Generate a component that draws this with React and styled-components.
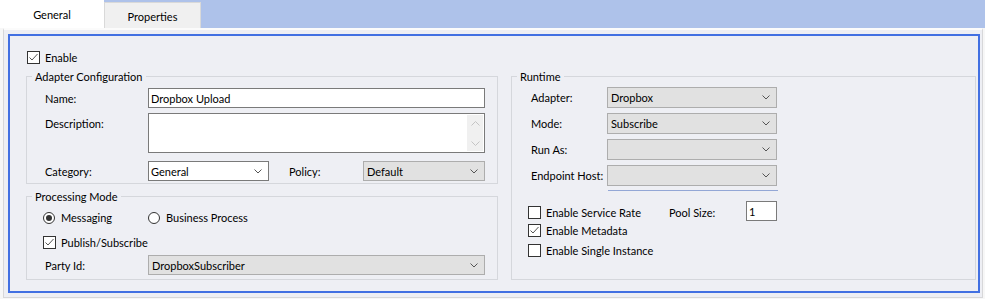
import React from 'react';
import styled, { createGlobalStyle } from 'styled-components';

const GlobalStyle = createGlobalStyle`
  html, body {
    margin: 0;
    padding: 0;
    background: #f7f7f7;
  }
  body {
    font-family: Lato, "Open Sans", sans-serif;
    font-size: 11px;
    color: #000;
  }
  * {
    box-sizing: border-box;
  }
`;

const Window = styled.div`
  width: 985px;
  height: 299px;
  display: flex;
  flex-direction: column;
  background: #f7f7f7;
  overflow: hidden;
`;

const TabStrip = styled.div`
  height: 28px;
  flex-shrink: 0;
  display: flex;
  align-items: flex-end;
  background: #aec2ea;
`;

const Tab = styled.div`
  width: ${p => (p.$active ? 104 : 97)}px;
  height: ${p => (p.$active ? 28 : 26)}px;
  display: flex;
  align-items: center;
  justify-content: center;
  background: ${p => (p.$active ? '#ffffff' : '#f0f0f0')};
  border: ${p => (p.$active ? 'none' : '1px solid #d9d9d9')};
  border-bottom: none;
  padding-top: ${p => (p.$active ? 0 : 1)}px;
`;

const Body = styled.div`
  flex: 1;
  display: flex;
  padding: 0 2px 1px 3px;
`;

const Panel = styled.div`
  flex: 1;
  display: flex;
  background: #eeeff4;
  border: 1px solid #d7d7d9;
  border-top: 2px solid #fbfbfb;
  padding: 4px 2px 4px 4px;
`;

const Frame = styled.div`
  flex: 1;
  border: 2px solid #4270e2;
  padding: 15px 2px 0 16px;
  display: flex;
  flex-direction: column;
`;

const CheckRow = styled.label`
  display: flex;
  align-items: center;
  gap: 5px;
  height: 13px;
  padding-left: ${p => p.$indent || 0}px;
`;

const Columns = styled.div`
  display: grid;
  grid-template-columns: 472px 465px;
  column-gap: 13px;
  margin-top: 6px;
`;

const LeftColumn = styled.div`
  display: flex;
  flex-direction: column;
  gap: 6px;
`;

const Group = styled.fieldset`
  margin: 0;
  padding: 0;
  min-width: 0;
  border: 1px solid #d5d7dc;
  height: ${p => p.$height}px;
`;

const Legend = styled.legend`
  margin-left: 5px;
  padding: 0 3px;
  line-height: 13px;
  font-size: 11px;
`;

const FormGrid = styled.div`
  display: grid;
  grid-template-columns: ${p => p.$cols};
  row-gap: ${p => p.$gap}px;
  padding: ${p => p.$pad};
  align-items: center;
`;

const Label = styled.span`
  align-self: ${p => (p.$top ? 'start' : 'center')};
  padding-top: ${p => (p.$top ? 4 : 0)}px;
  margin-top: ${p => p.$mt || 0}px;
  white-space: nowrap;
`;

const TextBox = styled.div`
  height: ${p => p.$h || 20}px;
  width: ${p => (p.$w ? `${p.$w}px` : 'auto')};
  background: #fff;
  border: 1px solid #7a7a7a;
  padding: 0 2px;
  display: flex;
  align-items: center;
`;

const TextArea = styled.div`
  height: 40px;
  background: #fff;
  border: 1px solid #7a7a7a;
  display: flex;
  justify-content: flex-end;
  padding: 1px;
`;

const ScrollBar = styled.div`
  width: 16px;
  background: #f0f0f0;
  display: flex;
  flex-direction: column;
  justify-content: space-between;
  align-items: center;
  padding: 6px 0 5px;
`;

const Select = styled.div`
  height: ${p => p.$h || 20}px;
  width: ${p => (p.$w ? `${p.$w}px` : 'auto')};
  flex: ${p => (p.$w ? 'none' : 1)};
  display: flex;
  align-items: center;
  padding: 0 6px 0 ${p => p.$pl || 2}px;
  background: ${p => (p.$gray ? '#e1e1e1' : '#fff')};
  border: 1px solid ${p => (p.$gray ? '#adadad' : '#7a7a7a')};
`;

const SelectText = styled.span`
  flex: 1;
`;

const Split = styled.div`
  display: flex;
  align-items: center;
  margin-top: 3px;
`;

const SideLabel = styled.span`
  width: 74px;
  margin-left: 20px;
`;

const RadioRow = styled.div`
  display: grid;
  grid-template-columns: 105px 1fr;
  margin-left: -2px;
  height: 12px;
  align-items: center;
`;

const RadioItem = styled.label`
  display: flex;
  align-items: center;
  gap: 6px;
`;

const Circle = styled.span`
  width: 12px;
  height: 12px;
  border-radius: 50%;
  border: 1px solid #333;
  background: #fff;
  display: flex;
  align-items: center;
  justify-content: center;
  &::after {
    content: '';
    width: 6px;
    height: 6px;
    border-radius: 50%;
    background: ${p => (p.$on ? '#333' : 'transparent')};
  }
`;

const Box = styled.span`
  width: 13px;
  height: 13px;
  flex: none;
  border: 1px solid #333;
  background: #fff;
  display: flex;
  align-items: center;
  justify-content: center;
`;

const ModeBody = styled.div`
  padding: 8px 12px 3px 18px;
  display: flex;
  flex-direction: column;
`;

const SubCheck = styled(CheckRow)`
  margin: 13px 0 0 -2px;
`;

const PartyRow = styled.div`
  display: grid;
  grid-template-columns: 103px 1fr;
  align-items: center;
  margin-top: 6px;
`;

const Underline = styled.div`
  height: 1px;
  width: 170px;
  margin: 4px 0 0 96px;
  background: #93a7d6;
`;

const Options = styled.div`
  display: flex;
  flex-direction: column;
  gap: 7px;
  padding-left: 16px;
  margin-top: 13px;
`;

const OptionRow = styled.div`
  display: grid;
  grid-template-columns: 141px 77px 31px;
  align-items: center;
  height: 13px;
`;

const PoolInput = styled(TextBox)`
  margin-top: -3px;
`;

function Chevron() {
  return (
    <svg width="8" height="5" viewBox="0 0 8 5">
      <polyline points="0.5,0.5 4,4 7.5,0.5" fill="none" stroke="#555" strokeWidth="1" />
    </svg>
  );
}

function Arrow({ up }) {
  return (
    <svg width="9" height="5" viewBox="0 0 9 5">
      <polyline
        points={up ? '0.5,4.5 4.5,0.5 8.5,4.5' : '0.5,0.5 4.5,4.5 8.5,0.5'}
        fill="none"
        stroke="#c4c4c4"
        strokeWidth="1"
      />
    </svg>
  );
}

function Check({ on }) {
  return (
    <Box>
      {on && (
        <svg width="11" height="11" viewBox="0 0 11 11">
          <polyline points="1.5,5.5 4,8 9.5,2" fill="none" stroke="#555" strokeWidth="1" />
        </svg>
      )}
    </Box>
  );
}

function Dropdown({ value, gray, w, pl, h }) {
  return (
    <Select $gray={gray} $w={w} $pl={pl} $h={h}>
      <SelectText>{value}</SelectText>
      <Chevron />
    </Select>
  );
}

export default function App() {
  return (
    <Window>
      <GlobalStyle />
      <TabStrip>
        <Tab $active>General</Tab>
        <Tab>Properties</Tab>
      </TabStrip>
      <Body>
        <Panel>
          <Frame>
            <CheckRow $indent={1}>
              <Check on />
              Enable
            </CheckRow>
            <Columns>
              <LeftColumn>
                <Group $height={114}>
                  <Legend>Adapter Configuration</Legend>
                  <FormGrid $cols="103px 1fr" $gap={5} $pad="5px 12px 2px 18px">
                    <Label>Name:</Label>
                    <TextBox>Dropbox Upload</TextBox>
                    <Label $top>Description:</Label>
                    <TextArea>
                      <ScrollBar>
                        <Arrow up />
                        <Arrow />
                      </ScrollBar>
                    </TextArea>
                    <Label $mt={3}>Category:</Label>
                    <Split>
                      <Dropdown value="General" w={121} />
                      <SideLabel>Policy:</SideLabel>
                      <Dropdown value="Default" gray pl={3} />
                    </Split>
                  </FormGrid>
                </Group>
                <Group $height={90}>
                  <Legend>Processing Mode</Legend>
                  <ModeBody>
                    <RadioRow>
                      <RadioItem>
                        <Circle $on />
                        Messaging
                      </RadioItem>
                      <RadioItem>
                        <Circle />
                        Business Process
                      </RadioItem>
                    </RadioRow>
                    <SubCheck>
                      <Check on />
                      Publish/Subscribe
                    </SubCheck>
                    <PartyRow>
                      <Label>Party Id:</Label>
                      <Dropdown value="DropboxSubscriber" gray pl={3} />
                    </PartyRow>
                  </ModeBody>
                </Group>
              </LeftColumn>
              <Group>
                <Legend>Runtime</Legend>
                <FormGrid $cols="76px 170px" $gap={5} $pad="4px 0 0 19px">
                  <Label>Adapter:</Label>
                  <Dropdown value="Dropbox" gray pl={3} h={21} />
                  <Label>Mode:</Label>
                  <Dropdown value="Subscribe" gray pl={3} h={21} />
                  <Label>Run As:</Label>
                  <Dropdown gray h={21} />
                  <Label>Endpoint Host:</Label>
                  <Dropdown gray h={21} />
                </FormGrid>
                <Underline />
                <Options>
                  <OptionRow>
                    <CheckRow>
                      <Check />
                      Enable Service Rate
                    </CheckRow>
                    <span>Pool Size:</span>
                    <PoolInput $w={31}>1</PoolInput>
                  </OptionRow>
                  <CheckRow>
                    <Check on />
                    Enable Metadata
                  </CheckRow>
                  <CheckRow>
                    <Check />
                    Enable Single Instance
                  </CheckRow>
                </Options>
              </Group>
            </Columns>
          </Frame>
        </Panel>
      </Body>
    </Window>
  );
}
